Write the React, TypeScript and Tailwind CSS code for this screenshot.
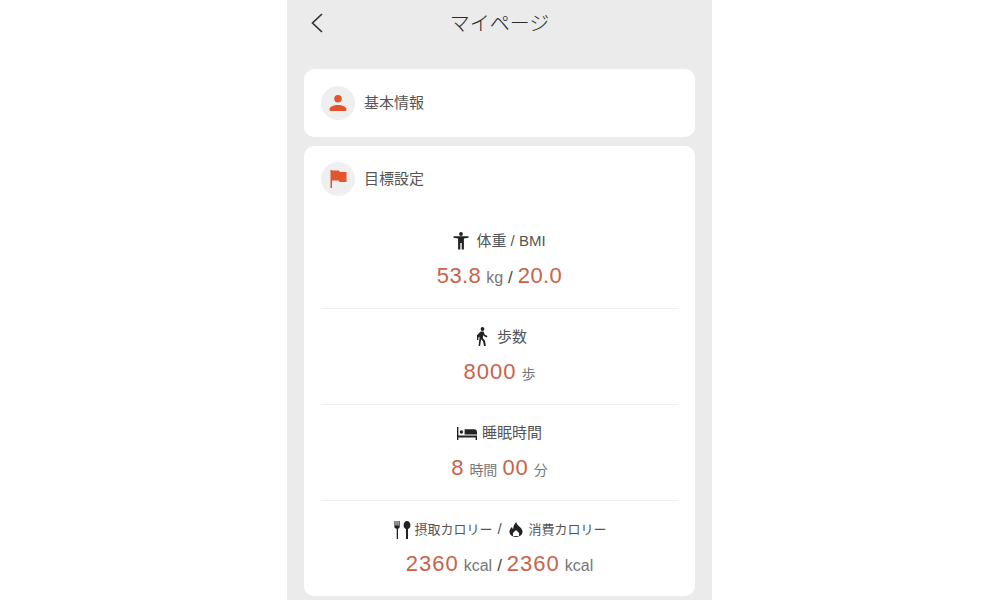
import React from "react";

const accent = "text-[#e2552f]";

function Unit({ children }: { children: React.ReactNode }) {
    return <span className="text-[14px] text-[#777] ml-[5px]">{children}</span>;
}

function LatinUnit({ children }: { children: React.ReactNode }) {
    return <span className="text-[16px] text-[#777] ml-[5px]">{children}</span>;
}

function Num({ children }: { children: React.ReactNode }) {
    return <span className="text-[22px] tracking-[1px] text-[#c9634a]">{children}</span>;
}

function Decimal({ children }: { children: React.ReactNode }) {
    return <span className="text-[22px] tracking-[0.4px] text-[#c9634a]">{children}</span>;
}

function Slash() {
    return <span className="text-[17px] text-[#444] mx-[5px]">/</span>;
}

const WeightIcon = () => (
    <svg width="16" height="18" viewBox="0 0 16 18" fill="#222">
        <circle cx="8" cy="2" r="1.9" />
        <path d="M0.5 4.2h15v1.6l-4.6 0.6V17.5H8.7v-6.5H7.3v6.5H5.1V6.4L0.5 5.8z" />
    </svg>
);

const WalkIcon = () => (
    <svg width="14" height="20" viewBox="0 0 14 20" fill="#222">
        <circle cx="7.5" cy="2" r="1.9" />
        <path d="M5.6 4.6h3l1.2 3.2 2.7 1.3-.6 1.3-3.2-1.4-.5-1.2-.4 3.4 2.2 2.6.8 5.2H9l-.9-4.500-2-2.200-1 6.700H3.600l1-9.300-1.300.8v2.600H2V8.200z" />
    </svg>
);

const BedIcon = () => (
    <svg width="20" height="13" viewBox="0 0 20 13" fill="#222">
        <path d="M0 0h1.400v8.600H20V13h-1.400v-2.400H1.400V13H0z" />
        <circle cx="4.400" cy="5" r="1.700" />
        <path d="M7.600 2.200H17a3 3 0 0 1 3 3v2.400H7.600z" />
    </svg>
);

const FoodIcon = () => (
    <svg width="17" height="18" viewBox="0 0 17 18" fill="#222">
        <path d="M0.400 0h1.100v4.600h1V0h1.100v4.600h1V0h1.100v5.800c0 1-.7 1.700-1.700 1.900V18H2.700V7.700C1.100 7.500.4 6.800.4 5.800z" />
        <path d="M13 0c2 0 3.400 1.900 3.400 4.200 0 2-1 3.400-2.400 3.800V18h-2V8C10.600 7.600 9.600 6.200 9.600 4.200 9.600 1.900 11 0 13 0z" />
    </svg>
);

const FireIcon = () => (
    <svg width="14" height="15" viewBox="0 0 15 16" fill="#222">
        <path d="M7.800 0c.4 2.300 1.500 3.200 2.900 4.500C12.300 6 14.500 7.600 14.500 10.500c0 3.300-3 5.500-7 5.500s-7-2.200-7-5.500c0-2.400 1.400-4 2.700-5.100.2 1 .6 1.700 1.300 2.200C4.500 4.600 5.700 1.800 7.800 0z" />
        <path d="M7.500 8.500l3.300 3.200V15h-6.600v-3.300z" fill="#fff" />
    </svg>
);

function Row({ title, children, last }: { title: React.ReactNode; children: React.ReactNode; last?: boolean }) {
    return (
        <div className={`h-[96px] pt-[16px] flex flex-col items-center ${last ? "" : "border-b border-[#eeeeee]"}`}>
            <div className="h-[24px] flex items-center text-[15px] text-[#555]">{title}</div>
            <div className="h-[44px] flex items-center justify-center">
                <div className="flex items-baseline">{children}</div>
            </div>
        </div>
    );
}

export default function App() {
    return (
        <div className="h-[600px] bg-white overflow-hidden font-['Liberation_Sans','Noto_Sans_CJK_JP',sans-serif]">
            <div className="w-[425px] h-[600px] ml-[287px] bg-[#ebebeb] px-[17px]">
                {/* Header */}
                <div className="relative h-[47px] flex items-center justify-center">
                    <svg className="absolute left-[6px] top-[12px]" width="14" height="22" viewBox="0 0 14 22" fill="none" stroke="#333" strokeWidth="1.7">
                        <path d="M12 2 L2.500 11 L12 20" />
                    </svg>
                    <span className="text-[20px] text-[#2a2a2a] font-light">マイページ</span>
                </div>

                <div className="mt-[22px] h-[68px] bg-white rounded-[10px] px-[17px] flex items-center gap-[9px]">
                    <div className="w-[34px] h-[34px] rounded-full bg-[#f0efef] flex items-center justify-center">
                        <svg className={accent} width="18" height="18" viewBox="0 0 18 18" fill="currentColor">
                            <circle cx="9" cy="4.800" r="3.800" />
                            <path d="M0.500 15.500c0-3 4.300-4.500 8.500-4.500s8.500 1.500 8.500 4.500c0 1-.7 1.500-1.500 1.500H2c-.8 0-1.500-.5-1.500-1.500z" />
                        </svg>
                    </div>
                    <span className="text-[15px] text-[#555]">基本情報</span>
                </div>

                <div className="mt-[9px] h-[450px] bg-white rounded-[10px] px-[17px] pt-[16px]">
                    <div className="flex items-center gap-[9px]">
                        <div className="w-[34px] h-[34px] rounded-full bg-[#f0efef] flex items-center justify-center">
                            <svg className={accent} width="17" height="20" viewBox="0 0 17 20" fill="currentColor">
                                <path d="M0.500 1h1.500v18H0.500z" />
                                <path d="M2 1.500h7l.8 1.500H16.500v10H9.500l-.8-1.500H2z" />
                            </svg>
                        </div>
                        <span className="text-[15px] text-[#555]">目標設定</span>
                    </div>

                    <div className="mt-[17px]">
                        <Row title={<><span className="mr-[7px]"><WeightIcon /></span>体重 / BMI</>}>
                            <Decimal>53.8</Decimal><LatinUnit>kg</LatinUnit><Slash /><Decimal>20.0</Decimal>
                        </Row>
                        <Row title={<><span className="ml-[3px] mr-[8px]"><WalkIcon /></span>歩数</>}>
                            <Num>8000</Num><Unit>歩</Unit>
                        </Row>
                        <Row title={<><span className="mr-[5px]"><BedIcon /></span>睡眠時間</>}>
                            <Num>8</Num><Unit>時間</Unit><span className="w-[5px]" /><Num>00</Num><Unit>分</Unit>
                        </Row>
                        <Row last title={
                            <span className="flex items-center text-[13px] ml-[2px] pt-[1px]">
                                <span className="mr-[3px]"><FoodIcon /></span>摂取カロリー
                                <span className="ml-[5px] mr-[3px] text-[15px]">/</span>
                                <span className="mx-[4px]"><FireIcon /></span><span className="ml-[2px]">消費カロリー</span>
                            </span>
                        }>
                            <Num>2360</Num><LatinUnit>kcal</LatinUnit><Slash /><Num>2360</Num><LatinUnit>kcal</LatinUnit>
                        </Row>
                    </div>
                </div>
            </div>
        </div>
    );
}
